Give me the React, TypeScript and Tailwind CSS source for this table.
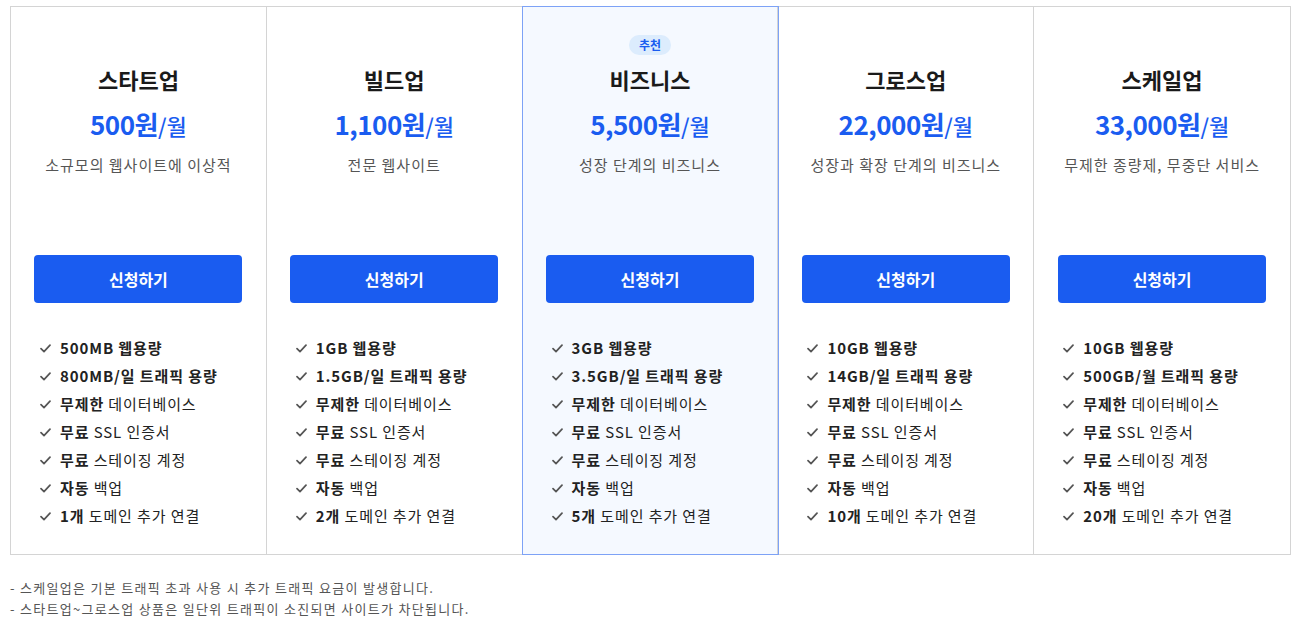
import React from 'react';

type Feature = { bold: string; rest?: string };

interface Plan {
  name: string;
  price: string;
  desc: string;
  featured?: boolean;
  features: Feature[];
}

const common = (domains: string): Feature[] => [
  { bold: '무제한', rest: ' 데이터베이스' },
  { bold: '무료', rest: ' SSL 인증서' },
  { bold: '무료', rest: ' 스테이징 계정' },
  { bold: '자동', rest: ' 백업' },
  { bold: domains, rest: ' 도메인 추가 연결' },
];

const plans: Plan[] = [
  {
    name: '스타트업',
    price: '500원',
    desc: '소규모의 웹사이트에 이상적',
    features: [{ bold: '500MB 웹용량' }, { bold: '800MB/일 트래픽 용량' }, ...common('1개')],
  },
  {
    name: '빌드업',
    price: '1,100원',
    desc: '전문 웹사이트',
    features: [{ bold: '1GB 웹용량' }, { bold: '1.5GB/일 트래픽 용량' }, ...common('2개')],
  },
  {
    name: '비즈니스',
    price: '5,500원',
    desc: '성장 단계의 비즈니스',
    featured: true,
    features: [{ bold: '3GB 웹용량' }, { bold: '3.5GB/일 트래픽 용량' }, ...common('5개')],
  },
  {
    name: '그로스업',
    price: '22,000원',
    desc: '성장과 확장 단계의 비즈니스',
    features: [{ bold: '10GB 웹용량' }, { bold: '14GB/일 트래픽 용량' }, ...common('10개')],
  },
  {
    name: '스케일업',
    price: '33,000원',
    desc: '무제한 종량제, 무중단 서비스',
    features: [{ bold: '10GB 웹용량' }, { bold: '500GB/월 트래픽 용량' }, ...common('20개')],
  },
];

function Check() {
  return (
    <svg width="11" height="9" viewBox="0 0 11 9" fill="none" className="shrink-0">
      <path d="M1 4.6 L4 7.6 L10 1.2" stroke="#555" strokeWidth="1.7" strokeLinecap="round" strokeLinejoin="round" />
    </svg>
  );
}

function PlanColumn({ plan, last }: { plan: Plan; last: boolean }) {
  return (
    <div
      className={`relative flex flex-col items-center pt-[24px] pb-[24px] ${
        plan.featured ? 'z-10 bg-[#f5f9ff] shadow-[0_0_0_1px_#7da2f6]' : ''
      } ${last ? '' : 'border-r border-[#d4d4d4]'}`}
    >
      {/* Badge slot */}
      <div className="h-[20px]">
        {plan.featured && (
          <span className="inline-flex h-[20px] items-center rounded-full bg-[#dcecfd] px-[10px] text-[12px] font-bold text-[#1a5cf0]">
            추천
          </span>
        )}
      </div>
      <h3 className="mt-[13px] text-[22px] leading-[30px] font-bold text-[#1a1a1a]">{plan.name}</h3>
      <div className="mt-[12px] leading-[36px] text-[#1a5cf0]">
        <span className="text-[26px] font-bold tracking-[-0.5px]">{plan.price}</span>
        <span className="text-[22px] font-medium">/월</span>
      </div>
      <p className="mt-[8px] text-[15px] leading-[22px] tracking-[1px] text-[#555]">{plan.desc}</p>

      <button className="mt-[79px] h-[48px] w-[208px] rounded-[4px] bg-[#1a5cf0] text-[16px] font-bold text-white">
        신청하기
      </button>

      <ul className="mt-[31px] w-full pl-[29px]">
        {plan.features.map((f, i) => (
          <li key={i} className="flex items-center gap-[9px] text-[15px] leading-[28px] tracking-[0.9px] text-[#222]">
            <Check />
            <span>
              <b className="font-bold">{f.bold}</b>
              {f.rest}
            </span>
          </li>
        ))}
      </ul>
    </div>
  );
}

export default function App() {
  return (
    <div
      className="min-h-screen bg-white pt-[6px] pl-[10px]"
      style={{ fontFamily: '"Noto Sans CJK KR", "Noto Sans", sans-serif' }}
    >
      <div className="grid w-[1281px] grid-cols-5 border border-[#d4d4d4]">
        {plans.map((p, i) => (
          <PlanColumn key={p.name} plan={p} last={i === plans.length - 1} />
        ))}
      </div>

      <div className="mt-[22px] text-[13px] leading-[21px] tracking-[1.3px] text-[#555]">
        <p>- 스케일업은 기본 트래픽 초과 사용 시 추가 트래픽 요금이 발생합니다.</p>
        <p>- 스타트업~그로스업 상품은 일단위 트래픽이 소진되면 사이트가 차단됩니다.</p>
      </div>
    </div>
  );
}
